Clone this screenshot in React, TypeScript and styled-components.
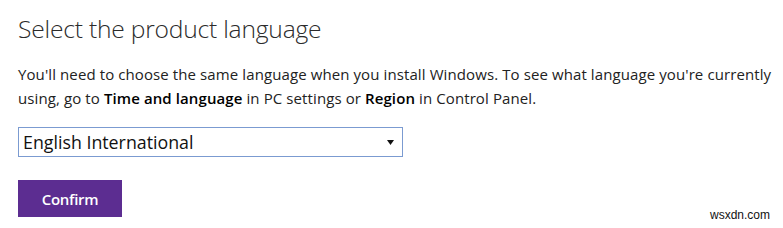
import * as React from 'react'
import styled, { createGlobalStyle } from 'styled-components'

const GlobalStyle = createGlobalStyle`
  html, body {
    margin: 0;
    padding: 0;
    background: #fff;
  }
  body {
    width: 783px;
    height: 228px;
    overflow: hidden;
    font-family: "Open Sans", "Noto Sans", sans-serif;
  }
`

const Page = styled.div`
  position: relative;
  width: 783px;
  height: 228px;
  overflow: hidden;
  padding: 14px 0 0 18px;
  box-sizing: border-box;
`

const Title = styled.h1`
  margin: 0;
  font-family: "Open Sans", sans-serif;
  font-weight: 300;
  font-size: 24.6px;
  line-height: 30px;
  color: #2b2b2b;
  letter-spacing: -0.2px;
`

const Text = styled.p`
  margin: 18px 0 0;
  width: 820px;
  font-size: 15px;
  line-height: 24px;
  color: #222;
  white-space: nowrap;
  letter-spacing: 0.1px;

  b {
    font-weight: 600;
    color: #000;
  }
`

const SelectBox = styled.div`
  position: relative;
  margin-top: 17px;
  width: 385px;
  height: 30px;
  box-sizing: border-box;
  border: 1px solid #7b9bd1;
  display: flex;
  align-items: center;
`

const SelectInput = styled.select`
  appearance: none;
  -webkit-appearance: none;
  border: none;
  outline: none;
  background: transparent;
  width: 100%;
  height: 100%;
  padding: 0 0 0 4px;
  font-family: "Open Sans", sans-serif;
  font-size: 17.8px;
  color: #111;
`

const Arrow = styled.svg`
  position: absolute;
  right: 8px;
  top: 12px;
  pointer-events: none;
`

const Button = styled.button`
  display: block;
  margin-top: 23px;
  width: 104px;
  height: 37px;
  border: none;
  background: #5c2d91;
  color: #fff;
  font-family: "Open Sans", sans-serif;
  font-weight: 600;
  font-size: 15px;
  letter-spacing: -0.3px;
  padding: 0;
`

const Watermark = styled.span`
  position: absolute;
  left: 710px;
  top: 208px;
  font-family: "Liberation Sans", Arial, sans-serif;
  font-size: 12px;
  color: #111;
`

export default function App() {
  return (
    <Page>
      <GlobalStyle />
      <Title>Select the product language</Title>
      <Text>
        You'll need to choose the same language when you install Windows. To see what language you're currently
        <br />
        using, go to <b>Time and language</b> in PC settings or <b>Region</b> in Control Panel.
      </Text>
      <SelectBox>
        <SelectInput defaultValue="en-gb">
          <option value="en-gb">English International</option>
          <option value="en-us">English</option>
        </SelectInput>
        <Arrow width="7" height="5" viewBox="0 0 7 5">
          <path d="M0 0 H7 L3.5 5 Z" fill="#111" />
        </Arrow>
      </SelectBox>
      <Button>Confirm</Button>
      <Watermark>wsxdn.com</Watermark>
    </Page>
  )
}
